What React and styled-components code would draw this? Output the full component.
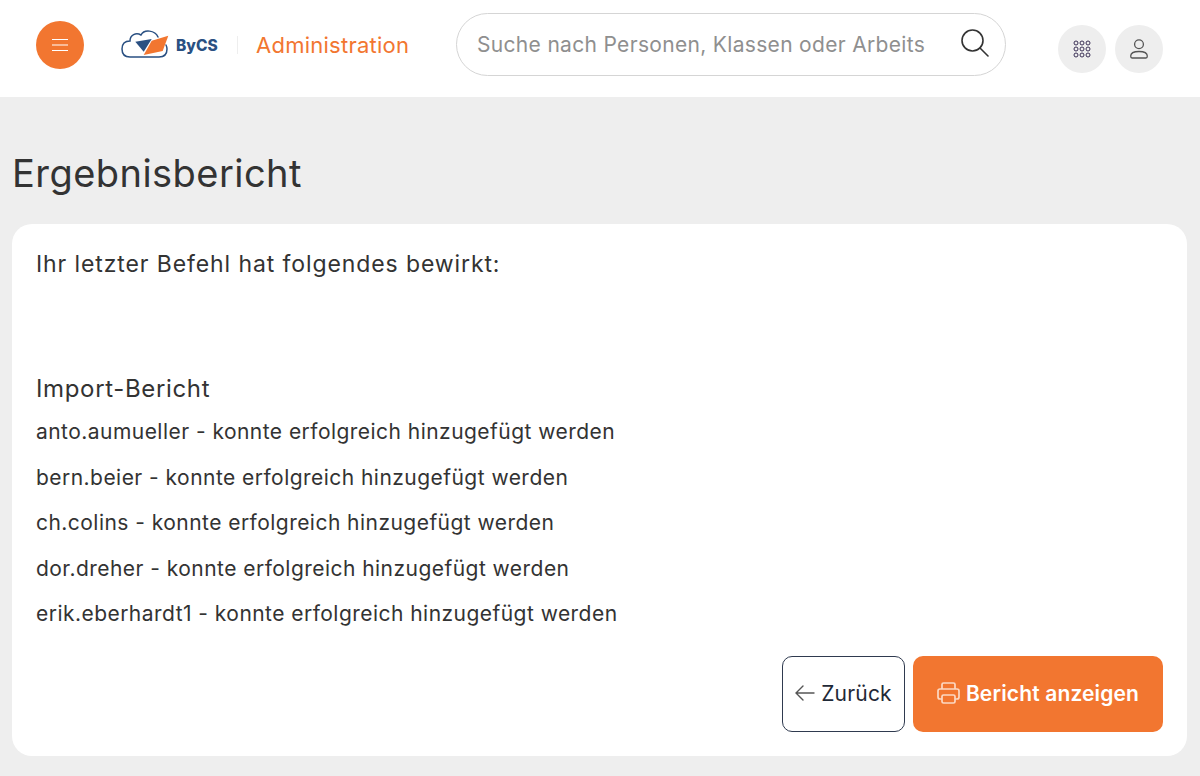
import React from "react";
import styled, { createGlobalStyle } from "styled-components";

const GlobalStyle = createGlobalStyle`
  html, body {
    margin: 0;
    padding: 0;
    background: #eeeeee;
    font-family: Inter, "Noto Sans", sans-serif;
    color: #333333;
  }
`;

const Page = styled.div`
  width: 1200px;
  height: 776px;
  overflow: hidden;
`;

const Header = styled.header`
  height: 97px;
  background: #ffffff;
  display: flex;
  align-items: center;
  padding: 0 0 7px 36px;
  box-sizing: border-box;
`;

const MenuButton = styled.div`
  width: 48px;
  height: 48px;
  border-radius: 50%;
  background: #f27630;
  display: flex;
  align-items: center;
  justify-content: center;
`;

const LogoWrap = styled.div`
  margin: -4px 0 0 37px;
  width: 98px;
  height: 34px;
  display: flex;
  align-items: center;
`;

const LogoWord = styled.span`
  margin: 4px 0 0 7px;
  font-size: 15.5px;
  font-weight: 800;
  color: #2a5082;
`;

const Divider = styled.div`
  margin-left: 18px;
  width: 1px;
  height: 18px;
  background: #eeeeee;
`;

const AppName = styled.div`
  margin-left: 18px;
  font-size: 22px;
  letter-spacing: 0.25px;
  color: #f27630;
  width: 153px;
  white-space: nowrap;
`;

const SearchBox = styled.div`
  margin: -1px 0 0 47px;
  width: 550px;
  height: 63px;
  box-sizing: border-box;
  border: 1px solid #d5d5d5;
  border-radius: 32px;
  display: flex;
  align-items: center;
  padding: 0 16px 0 20px;
`;

const SearchText = styled.div`
  flex: 1;
  font-size: 21px;
  letter-spacing: 0.32px;
  color: #8f8f8f;
  white-space: nowrap;
  overflow: hidden;
`;

const SearchGlyph = styled.svg`
  margin-bottom: 3px;
`;

const RoundIcon = styled.div`
  width: 48px;
  height: 48px;
  margin-top: 8px;
  border-radius: 50%;
  background: #eeeeee;
  display: flex;
  align-items: center;
  justify-content: center;
  margin-left: ${(p) => p.$gap}px;
`;

const Title = styled.h1`
  margin: 0;
  padding: 53px 0 27px 12px;
  font-size: 38px;
  line-height: 47px;
  letter-spacing: 0.45px;
  font-weight: 400;
  color: #333333;
`;

const Card = styled.main`
  margin-left: 12px;
  width: 1175px;
  height: 532px;
  box-sizing: border-box;
  background: #ffffff;
  border-radius: 20px;
  padding: 26px 24px 24px;
  display: flex;
  flex-direction: column;
`;

const Lead = styled.p`
  margin: 0;
  font-size: 23px;
  line-height: 28px;
  letter-spacing: 0.9px;
`;

const SectionTitle = styled.h2`
  margin: 97px 0 0;
  font-size: 24px;
  line-height: 28px;
  letter-spacing: 0.65px;
  font-weight: 400;
`;

const ResultList = styled.div`
  margin-top: 17px;
  display: flex;
  flex-direction: column;
  gap: 21px;
`;

const ResultRow = styled.div`
  font-size: 21px;
  line-height: 24.5px;
  letter-spacing: 0.46px;
`;

const Actions = styled.div`
  margin-top: auto;
  display: flex;
  justify-content: flex-end;
  gap: 8px;
`;

const Button = styled.button`
  height: 76px;
  box-sizing: border-box;
  border-radius: 10px;
  display: flex;
  align-items: center;
  justify-content: center;
  gap: 6px;
  font-family: inherit;
  font-size: 21px;
  padding: 0 0 2px;
  width: ${(p) => p.$width}px;
  letter-spacing: ${(p) => (p.$primary ? 0.15 : 0.2)}px;
  background: ${(p) => (p.$primary ? "#f27630" : "#ffffff")};
  color: ${(p) => (p.$primary ? "#ffffff" : "#1f2937")};
  border: ${(p) => (p.$primary ? "none" : "1.3px solid #2f3a4f")};
  font-weight: ${(p) => (p.$primary ? 600 : 400)};
`;

const rows = [
  "anto.aumueller - konnte erfolgreich hinzugefügt werden",
  "bern.beier - konnte erfolgreich hinzugefügt werden",
  "ch.colins - konnte erfolgreich hinzugefügt werden",
  "dor.dreher - konnte erfolgreich hinzugefügt werden",
  "erik.eberhardt1 - konnte erfolgreich hinzugefügt werden",
];

const Logo = () => (
  <svg width="48" height="29" viewBox="0 0 48 29" fill="none">
    <path d="M37 8 C34 1 23 0 20 6 C15 3 9 6 9 12 C3 12 1 16 1 20 C1 25 4 28 9 28 L38 28 C43 28 46 25 46 20 C46 18 45.5 17 45 16" stroke="#2a5082" strokeWidth="1.5" strokeLinecap="round" />
    <path d="M14.3 12.7 L30.7 10 L22.7 22.7 Z" fill="#2a5082" />
    <path d="M47.3 6.7 L41.7 22 L22.7 26 L30.7 11.7 Z" fill="#f27630" />
  </svg>
);

const SearchIcon = () => (
  <SearchGlyph width="28" height="28" viewBox="0 0 28 28" fill="none" stroke="#333" strokeWidth="1.6" strokeLinecap="round">
    <circle cx="11.5" cy="11.5" r="10.5" />
    <path d="M19 19 L27 27" />
  </SearchGlyph>
);

const GridIcon = () => (
  <svg width="18" height="18" viewBox="0 0 18 18" fill="none" stroke="#3a2f55" strokeWidth="1">
    {[3, 9, 15].map((y) =>
      [3, 9, 15].map((x) => <circle key={`${x}-${y}`} cx={x} cy={y} r="2" />)
    )}
  </svg>
);

const UserIcon = () => (
  <svg width="18" height="20" viewBox="0 0 18 20" fill="none" stroke="#555" strokeWidth="1.3">
    <circle cx="9" cy="5.3" r="4.4" />
    <path d="M2 19 L16 19 C17 19 17.3 18 17.3 17 C17.3 14 13.5 12.5 9 12.5 C4.5 12.5 0.7 14 0.7 17 C0.7 18 1 19 2 19 Z" />
  </svg>
);

const ArrowIcon = () => (
  <svg width="20" height="16" viewBox="0 0 20 16" fill="none" stroke="#555" strokeWidth="1.4" strokeLinecap="round">
    <path d="M19 8 L1 8 M8 1 L1 8 L8 15" />
  </svg>
);

const PrinterIcon = () => (
  <svg width="23" height="22" viewBox="0 0 23 22" fill="none" stroke="#fcd9c4" strokeWidth="1.7" strokeLinejoin="round">
    <path d="M5 7 V2.5 A1.5 1.5 0 0 1 6.5 1 H16.5 A1.5 1.5 0 0 1 18 2.5 V7" />
    <path d="M5 17 H3 A2 2 0 0 1 1 15 V9 A2 2 0 0 1 3 7 H20 A2 2 0 0 1 22 9 V15 A2 2 0 0 1 20 17 H18" />
    <rect x="5" y="13" width="13" height="8" rx="1.5" />
  </svg>
);

export default function App() {
  return (
    <Page>
      <GlobalStyle />
      <Header>
        <MenuButton>
          <svg width="18" height="14" viewBox="0 0 18 14" stroke="#fff" strokeWidth="1.2">
            <path d="M1 1.5 H17 M1 7 H17 M1 12.5 H17" />
          </svg>
        </MenuButton>
        <LogoWrap>
          <Logo />
          <LogoWord>ByCS</LogoWord>
        </LogoWrap>
        <Divider />
        <AppName>Administration</AppName>
        <SearchBox>
          <SearchText>Suche nach Personen, Klassen oder Arbeits</SearchText>
          <SearchIcon />
        </SearchBox>
        <RoundIcon $gap={52}><GridIcon /></RoundIcon>
        <RoundIcon $gap={9}><UserIcon /></RoundIcon>
      </Header>
      <Title>Ergebnisbericht</Title>
      <Card>
        <Lead>Ihr letzter Befehl hat folgendes bewirkt:</Lead>
        <SectionTitle>Import-Bericht</SectionTitle>
        <ResultList>
          {rows.map((r) => (
            <ResultRow key={r}>{r}</ResultRow>
          ))}
        </ResultList>
        <Actions>
          <Button $width={123}><ArrowIcon />Zurück</Button>
          <Button $primary $width={250}><PrinterIcon />Bericht anzeigen</Button>
        </Actions>
      </Card>
    </Page>
  );
}
